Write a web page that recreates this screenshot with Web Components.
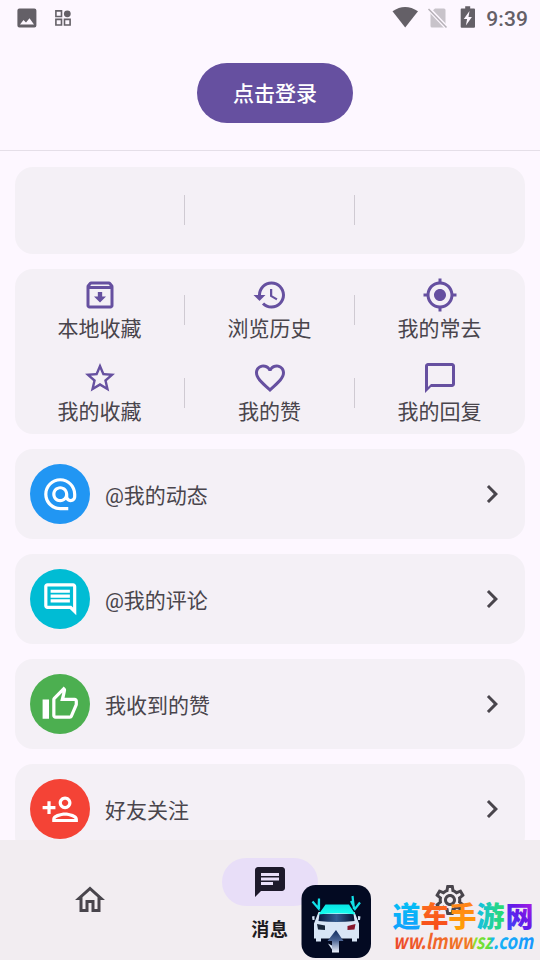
<!DOCTYPE html>
<html lang="zh-CN">
<head>
<meta charset="utf-8">
<title>消息</title>
<style>
html,body{margin:0;height:100%}
body{width:540px;height:960px;overflow:hidden;background:#fdf7ff;color:#49454c;font-family:Roboto,"Noto Sans CJK SC",sans-serif;font-size:21px}
</style>
</head>
<body>
<app-shell></app-shell>
<script>
const ICONS = {
  archive: 'M20.54 5.23l-1.39-1.68C18.88 3.21 18.47 3 18 3H6c-.47 0-.88.21-1.16.55L3.46 5.23C3.17 5.57 3 6.02 3 6.5V19c0 1.1.9 2 2 2h14c1.1 0 2-.9 2-2V6.5c0-.48-.17-.93-.46-1.27zM6.24 5h11.52l.83 1H5.42l.82-1zM5 19V8h14v11H5zm8.45-9h-2.9v3H8l4 4 4-4h-2.55z',
  history: 'M13 3c-4.97 0-9 4.03-9 9H1l3.89 3.89.07.14L9 12H6c0-3.87 3.13-7 7-7s7 3.13 7 7-3.13 7-7 7c-1.93 0-3.68-.79-4.94-2.06l-1.42 1.42C8.27 19.99 10.51 21 13 21c4.97 0 9-4.03 9-9s-4.03-9-9-9zm-1 5v5l4.28 2.54.72-1.21-3.5-2.08V8H12z',
  location: 'M12 8c-2.21 0-4 1.79-4 4s1.79 4 4 4 4-1.79 4-4-1.79-4-4-4zm8.94 3c-.46-4.17-3.77-7.48-7.94-7.94V1h-2v2.06C6.83 3.52 3.52 6.83 3.06 11H1v2h2.06c.46 4.17 3.77 7.48 7.94 7.94V23h2v-2.06c4.17-.46 7.48-3.77 7.94-7.94H23v-2h-2.06zM12 19c-3.87 0-7-3.13-7-7s3.13-7 7-7 7 3.13 7 7-3.13 7-7 7z',
  star: 'M22 9.24l-7.19-.62L12 2 9.19 8.63 2 9.24l5.46 4.73L5.82 21 12 17.27 18.18 21l-1.63-7.03L22 9.24zM12 15.4l-3.76 2.27 1-4.28-3.32-2.88 4.38-.38L12 6.1l1.71 4.04 4.38.38-3.32 2.88 1 4.28L12 15.4z',
  heart: 'M16.5 3c-1.74 0-3.41.81-4.5 2.09C10.91 3.81 9.24 3 7.5 3 4.42 3 2 5.42 2 8.5c0 3.78 3.4 6.86 8.55 11.54L12 21.35l1.45-1.32C18.6 15.36 22 12.28 22 8.5 22 5.42 19.58 3 16.5 3zm-4.4 15.55l-.1.1-.1-.1C7.14 14.24 4 11.39 4 8.5 4 6.5 5.5 5 7.5 5c1.54 0 3.04.99 3.57 2.36h1.87C13.46 5.99 14.96 5 16.5 5c2 0 3.5 1.5 3.5 3.5 0 2.89-3.14 5.74-7.9 10.05z',
  bubble: 'M20 2H4c-1.1 0-2 .9-2 2v18l4-4h14c1.1 0 2-.9 2-2V4c0-1.1-.9-2-2-2zm0 14H6l-2 2V4h16v12z',
  at: 'M12 1.95c-5.52 0-10 4.48-10 10s4.48 10 10 10h5v-2h-5c-4.34 0-8-3.66-8-8s3.66-8 8-8 8 3.66 8 8v1.43c0 .79-.71 1.57-1.5 1.57s-1.5-.78-1.5-1.57v-1.43c0-2.76-2.24-5-5-5s-5 2.24-5 5 2.24 5 5 5c1.38 0 2.64-.56 3.54-1.47.65.89 1.77 1.47 2.96 1.47 1.97 0 3.5-1.6 3.5-3.57v-1.43c0-5.52-4.48-10-10-10zm0 13c-1.66 0-3-1.34-3-3s1.34-3 3-3 3 1.34 3 3-1.34 3-3 3z',
  comment: 'M21.99 4c0-1.1-.89-2-1.99-2H4c-1.1 0-2 .9-2 2v12c0 1.1.9 2 2 2h14l4 4-.01-18zM20 4v13.17L18.83 16H4V4h16zM6 12h12v2H6zm0-3h12v2H6zm0-3h12v2H6z',
  thumb: 'M9 21h9c.83 0 1.54-.5 1.84-1.22l3.02-7.05c.09-.23.14-.47.14-.73v-2c0-1.1-.9-2-2-2h-6.31l.95-4.57.03-.32c0-.41-.17-.79-.44-1.06L14.17 1 7.58 7.59C7.22 7.95 7 8.45 7 9v10c0 1.1.9 2 2 2zM9 9l4.34-4.34L12 10h9v2l-3 7H9V9zM1 9h4v12H1z',
  friend: 'M15 12c2.21 0 4-1.79 4-4s-1.79-4-4-4-4 1.79-4 4 1.79 4 4 4zm0-6c1.1 0 2 .9 2 2s-.9 2-2 2-2-.9-2-2 .9-2 2-2zm0 8c-2.67 0-8 1.34-8 4v2h16v-2c0-2.66-5.33-4-8-4zm-6 4c.22-.72 3.31-2 6-2 2.7 0 5.8 1.29 6 2H9zm-3-3v-3h3v-2H6V7H4v3H1v2h3v3z',
  chevron: 'M8.59 16.59L13.17 12 8.59 7.41 10 6l6 6-6 6z',
  home: 'M12 5.69l5 4.5V18h-2v-6H9v6H7v-7.81l5-4.5M12 3L2 12h3v8h6v-6h2v6h6v-8h3L12 3z',
  chat: 'M20 2H4c-1.1 0-1.99.9-1.99 2L2 22l4-4h14c1.1 0 2-.9 2-2V4c0-1.1-.9-2-2-2zM6 9h12v2H6V9zm8 5H6v-2h8v2zm4-6H6V6h12v2z',
  settings: 'M19.43 12.98c.04-.32.07-.64.07-.98 0-.34-.03-.66-.07-.98l2.11-1.65c.19-.15.24-.42.12-.64l-2-3.46c-.09-.16-.26-.25-.44-.25-.06 0-.12.01-.17.03l-2.49 1c-.52-.4-1.08-.73-1.69-.98l-.38-2.65C14.46 2.18 14.25 2 14 2h-4c-.25 0-.46.18-.49.42l-.38 2.65c-.61.25-1.17.59-1.69.98l-2.49-1c-.06-.02-.12-.03-.18-.03-.17 0-.34.09-.43.25l-2 3.46c-.13.22-.07.49.12.64l2.11 1.65c-.04.32-.07.65-.07.98 0 .33.03.66.07.98l-2.11 1.65c-.19.15-.24.42-.12.64l2 3.46c.09.16.26.25.44.25.06 0 .12-.01.17-.03l2.49-1c.52.4 1.08.73 1.69.98l.38 2.65c.03.24.24.42.49.42h4c.25 0 .46-.18.49-.42l.38-2.65c.61-.25 1.17-.59 1.69-.98l2.49 1c.06.02.12.03.18.03.17 0 .34-.09.43-.25l2-3.46c.12-.22.07-.49-.12-.64l-2.11-1.65zm-1.98-1.71c.04.31.05.52.05.73 0 .21-.02.43-.05.73l-.14 1.13.89.7 1.08.84-.7 1.21-1.27-.51-1.04-.42-.9.68c-.43.32-.84.56-1.25.73l-1.06.43-.16 1.13-.2 1.35h-1.4l-.19-1.35-.16-1.13-1.06-.43c-.43-.18-.83-.41-1.23-.71l-.91-.7-1.06.43-1.27.51-.7-1.21 1.08-.84.89-.7-.14-1.13c-.03-.31-.05-.54-.05-.74s.02-.43.05-.73l.14-1.13-.89-.7-1.08-.84.7-1.21 1.27.51 1.04.42.9-.68c.43-.32.84-.56 1.25-.73l1.06-.43.16-1.13.2-1.35h1.39l.19 1.35.16 1.13 1.06.43c.43.18.83.41 1.23.71l.91.7 1.06-.43 1.27-.51.7 1.21-1.07.85-.89.7.14 1.13zM12 8c-2.21 0-4 1.79-4 4s1.79 4 4 4 4-1.79 4-4-1.79-4-4-4zm0 6c-1.1 0-2-.9-2-2s.9-2 2-2 2 .9 2 2-.9 2-2 2z'
};

function define(name, render) {
  customElements.define(name, class extends HTMLElement {
    connectedCallback() {
      if (this.shadowRoot) return;
      this.attachShadow({ mode: 'open' }).innerHTML = render(this);
    }
  });
}

define('md-icon', el => `
<style>:host{display:block;flex:none;width:var(--icon-size,36px);height:var(--icon-size,36px)}svg{display:block;width:100%;height:100%}</style>
<svg viewBox="0 0 24 24" fill="currentColor"><path fill-rule="evenodd" d="${ICONS[el.getAttribute('name')]}"/></svg>`);

define('status-bar', () => `
<style>
:host{display:flex;height:36px;box-sizing:border-box;padding:0 12px 0 17px;align-items:center;color:#646067;flex:none}
svg{display:block;flex:none}
.gap{flex:1}
time{font:500 21px/24px Roboto,sans-serif;margin-left:10px;letter-spacing:.1px;padding-top:2px}
</style>
<svg width="20" height="36"><path fill-rule="evenodd" fill="currentColor" d="M2.400 8.500h15a2 2 0 0 1 2 2v15a2 2 0 0 1-2 2h-15a2 2 0 0 1-2-2v-15a2 2 0 0 1 2-2zM3 24.500h14l-4.500-6.300-3.500 4.400-2.500-2.700z"/></svg>
<svg width="18" height="36" style="margin-left:18px"><g fill="none" stroke="currentColor" stroke-width="1.600"><path d="M.9 10.900h5.600v5.600H.9zM.9 19.400h5.600V25H.9zM9.500 19.400h5.600V25H9.500z"/></g><circle cx="12.300" cy="13.800" r="3.400" fill="currentColor"/></svg>
<span class="gap"></span>
<svg width="28" height="36"><path fill="currentColor" d="M.5 11.300Q13 2.500 26 11.300L13.200 27.500z"/></svg>
<svg width="22" height="36" style="margin-left:7px"><path fill="#c8c3ca" d="M8 8.500h9a1.500 1.500 0 0 1 1.500 1.500v16a1.500 1.500 0 0 1-1.500 1.500H5A1.500 1.500 0 0 1 3.500 26V12.500z"/><path d="M1.500 8.500l18 19" stroke="#fdf7ff" stroke-width="4"/><path d="M1.500 9l18 18.500" stroke="#b5b0b7" stroke-width="1.500"/></svg>
<svg width="16" height="36" style="margin-left:11px"><path fill="currentColor" d="M1.500 8.500h3.700V6.200h5V8.500h3.800q1 0 1 1v17.300q0 1-1 1H1.700q-1 0-1-1V9.500q0-1 .8-1z"/><path fill="#fdf7ff" d="M9.500 11L3.800 19h3.300l-1.200 6.400 6-8.400H8.500z"/></svg>
<time>9:39</time>`);

define('login-header', () => `
<style>
:host{display:flex;height:114px;flex:none;justify-content:center;align-items:center;box-sizing:border-box;height:115px;padding-left:10px;border-bottom:1px solid #e5dfe8}
button{font:500 21px/30px Roboto,"Noto Sans CJK SC",sans-serif;border:0;width:156px;height:60px;border-radius:30px;background:#6650a0;color:#fff;padding:2px 0 0}
</style><button><slot></slot></button>`);

define('tile-card', () => `
<style>
:host{display:grid;grid-template-columns:repeat(3,170px);grid-auto-rows:var(--row,83px);flex:none;background:#f4f0f6;border-radius:18px;overflow:hidden}
</style><slot></slot>`);

define('tile-item', el => `
<style>
:host{display:grid;grid-template-columns:1fr 1px;align-items:center}
.body{display:flex;flex-direction:column;align-items:center;line-height:33px;padding-top:4px}
md-icon{color:#6650a0}
i{height:30px;background:#cfcad2}
:host([last]) i{background:none}
</style><div class="body">${el.getAttribute('icon') ? `<md-icon name="${el.getAttribute('icon')}"></md-icon>` : ''}<slot></slot></div><i></i>`);

define('list-row', el => `
<style>
:host{display:flex;align-items:center;height:90px;flex:none;box-sizing:border-box;padding:0 15px;gap:15px;background:#f4f0f6;border-radius:18px}
.disc{width:60px;height:60px;border-radius:50%;display:grid;place-items:center;color:#fff;background:${el.getAttribute('color')};--icon-size:38.5px}
.label{flex:1;line-height:30px;padding-top:3px}
</style><div class="disc"><md-icon name="${el.getAttribute('icon')}"></md-icon></div><div class="label"><slot></slot></div><md-icon name="chevron"></md-icon>`);

define('nav-item', el => `
<style>
:host{display:flex;flex-direction:column;align-items:center;justify-content:center;color:#49454c}
:host([active]){color:#1d192b}
.pill{width:96px;height:48px;border-radius:24px;display:grid;place-items:center}
:host([active]) .pill{background:#e8def8}
.text{font-size:18px;font-weight:700;line-height:24px;letter-spacing:.75px;padding-top:12px;color:#1d1b20}
:host(:not([active])) .text{display:none}
</style><div class="pill"><md-icon name="${el.getAttribute('icon')}"></md-icon></div><div class="text"><slot></slot></div>`);

define('nav-bar', () => `
<style>:host{display:grid;grid-template-columns:repeat(3,1fr);height:120.500px;flex:none;background:#f2edf1}</style><slot></slot>`);

define('site-mark', () => `
<style>:host{display:block;pointer-events:none}svg{display:block}</style>
<svg width="240" height="78" viewBox="300 882 240 78">
<defs>
<linearGradient id="roof" x1="0" x2="0" y1="0" y2="1"><stop stop-color="#07e3e3"/><stop offset="1" stop-color="#18ffef"/></linearGradient>
<linearGradient id="glass"><stop stop-color="#071a40"/><stop offset=".5" stop-color="#345b91"/><stop offset="1" stop-color="#061330"/></linearGradient>
<linearGradient id="road" x1="0" x2="0" y1="0" y2="1"><stop stop-color="#10295c"/><stop offset=".45" stop-color="#4a6393"/><stop offset="1" stop-color="#f0f5ff"/></linearGradient>
<linearGradient id="g1" x1="0" x2="0" y1="0" y2="1"><stop stop-color="#00c7f1"/><stop offset="1" stop-color="#159cff"/></linearGradient>
<linearGradient id="g2" x1="0" x2="0" y1="0" y2="1"><stop stop-color="#ff7821"/><stop offset="1" stop-color="#f54318"/></linearGradient>
<linearGradient id="g3" x1="0" x2="0" y1="0" y2="1"><stop stop-color="#ff7b20"/><stop offset="1" stop-color="#ffa500"/></linearGradient>
<linearGradient id="g4"><stop stop-color="#12bdec"/><stop offset="1" stop-color="#2dde67"/></linearGradient>
<linearGradient id="g5" x1="0" x2="1" y1="1" y2="0"><stop stop-color="#3657ff"/><stop offset=".5" stop-color="#6419e8"/><stop offset="1" stop-color="#c51be2"/></linearGradient>
<linearGradient id="url" gradientUnits="userSpaceOnUse" x1="393" x2="533" y1="0" y2="0"><stop stop-color="#ed482b"/><stop offset=".3" stop-color="#f0652a"/><stop offset=".56" stop-color="#f27a22"/><stop offset=".58" stop-color="#8fe02a"/><stop offset=".69" stop-color="#5ddf40"/><stop offset=".71" stop-color="#16b6f5"/><stop offset="1" stop-color="#1996ff"/></linearGradient>
</defs>
<rect x="301.500" y="885" width="69.500" height="73" rx="14" fill="#030a22"/>
<g fill="none" stroke="#12dfe8" stroke-width="2.200"><path d="M312.500 901.500l6 7 .5-10M319 909v-10M351 901l4 8 5-6.500M354 909l-1.500-13"/></g>
<path d="M318.500 912h36l4.500 11.500v15h-2v3h-5v-3h-31v3h-5v-3h-2v-15z" fill="#d8e5f6"/>
<path d="M319.500 914h34l1 7q-18 2-36 0z" fill="url(#glass)"/>
<path d="M325.500 904.500h23.500l6.500 10q-18-2.500-37 0z" fill="url(#roof)"/>
<path d="M312 916.500l2.500-.5v4h-2zM360.500 916.500l-2.500-.5v4h2z" fill="#d8e5f6"/>
<path d="M317 924l8 1.500v4.500l-7-.5z" fill="#18263a"/><path d="M355.500 924l-8 2v4l7-.5z" fill="#86152c"/>
<path d="M336 930l7.500 11h-4.500v11.500h-7V941h-4.500z" fill="url(#road)"/><path d="M328 943.500l4 2v4z" fill="#d8e5f6"/>
<g font-family="'Noto Sans CJK SC',sans-serif" font-weight="900" font-size="28">
<text x="392.500" y="926.500" fill="url(#g1)">道</text><text x="420.500" y="926.500" fill="url(#g2)">车</text><text x="448.500" y="926.500" fill="url(#g3)">手</text><text x="476.500" y="926.500" fill="url(#g4)">游</text><text x="505.500" y="926.500" fill="url(#g5)">网</text></g>
<text x="393" y="948.500" textLength="140" lengthAdjust="spacingAndGlyphs" font-family="'Noto Sans CJK SC',sans-serif" font-weight="700" font-style="italic" font-size="20.500" fill="url(#url)">ww.lmwwsz.com</text>
</svg>`);

define('app-shell', () => `
<style>
:host{display:flex;flex-direction:column;position:relative;width:540px;height:960px;overflow:hidden}
main{flex:1;min-height:0;overflow:hidden;display:flex;flex-direction:column;gap:15px;padding:16px 15px 0}
.stats{--row:86.500px}
.tiles{--row:82.800px}
.rows{display:flex;flex-direction:column;gap:15px}
site-mark{position:absolute;right:0;bottom:0}
</style>
<status-bar></status-bar>
<login-header>点击登录</login-header>
<main>
<tile-card class="stats"><tile-item></tile-item><tile-item></tile-item><tile-item last></tile-item></tile-card>
<tile-card class="tiles">
<tile-item icon="archive">本地收藏</tile-item><tile-item icon="history">浏览历史</tile-item><tile-item icon="location" last>我的常去</tile-item>
<tile-item icon="star">我的收藏</tile-item><tile-item icon="heart">我的赞</tile-item><tile-item icon="bubble" last>我的回复</tile-item>
</tile-card>
<div class="rows">
<list-row icon="at" color="#2196f3">@我的动态</list-row>
<list-row icon="comment" color="#00bcd4">@我的评论</list-row>
<list-row icon="thumb" color="#4caf50">我收到的赞</list-row>
<list-row icon="friend" color="#f44336">好友关注</list-row>
</div>
</main>
<nav-bar><nav-item icon="home"></nav-item><nav-item icon="chat" active>消息</nav-item><nav-item icon="settings"></nav-item></nav-bar>
<site-mark></site-mark>`);
</script>
</body>
</html>
